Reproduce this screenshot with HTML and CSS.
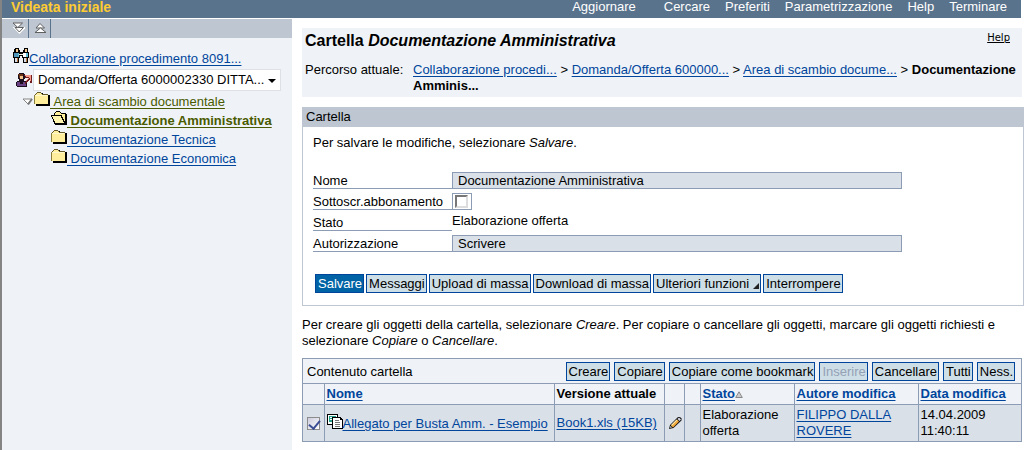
FILE: index.html
```html
<!DOCTYPE html>
<html lang="it">
<head>
<meta charset="utf-8">
<title>Cartella Documentazione Amministrativa</title>
<link rel="stylesheet" href="styles.css">
</head>
<body>
<svg class="defs" width="0" height="0" aria-hidden="true">
  <symbol id="folder" viewBox="0 0 16 14">
    <path d="M2 3h1V2h1V1h5v1h1v1h6v11H2z" fill="#000"/>
    <path d="M0 3h1V2h1V1h1V0h4v1h1v1h6v1H0z" fill="#665c2c"/>
    <path d="M0 3h14v9H0z" fill="#8c8040"/>
    <path d="M1 3h1V2h1V1h4v1h1v1h6v9H1z" fill="#ffef9c"/>
    <path d="M1 3h12v1H1z" fill="#fff8cf"/>
  </symbol>
  <symbol id="folder-open" viewBox="0 0 16 14">
    <path d="M3 2h1V1h1V0h4v1h1v1h5v1h1v11H4v-1H3v-2H2V8H1V6H0V4h3z" fill="#000"/>
    <path d="M4 2h1V1h4v1h1v1h4v7h-1V8h-1V6h-1V4H4z" fill="#ffef9c"/>
    <path d="M1 5h9v2h1v2h1v2h1v1H4v-2H3V8H2V6H1z" fill="#fff4ae"/>
  </symbol>
</svg>
<div class="app">
  <header class="topbar">
    <h1 class="topbar-title">Videata iniziale</h1>
    <nav class="topbar-nav">
      <a class="nav-refresh" href="#">Aggiornare</a>
      <a href="#">Cercare</a>
      <a href="#">Preferiti</a>
      <a href="#">Parametrizzazione</a>
      <a href="#">Help</a>
      <a href="#">Terminare</a>
    </nav>
  </header>
  <div class="columns">
    <aside class="sidebar">
      <div class="side-tools">
        <button class="tool" type="button" aria-label="Espandere tutto">
          <svg width="13" height="12" viewBox="0 0 13 12"><path d="M3 6h9l-4.500 4.500z" fill="#fff" stroke="#fff" stroke-width="2"/><path d="M3 5.500h8.500L7.300 10z" fill="#fff" stroke="#606060"/><path d="M1 1h9.500L5.800 5.500z" fill="#fff" stroke="#606060"/></svg>
        </button>
        <button class="tool" type="button" aria-label="Comprimere tutto">
          <svg width="13" height="12" viewBox="0 0 13 12"><path d="M2 6 6 1.500 10.500 6z" fill="#fff" stroke="#606060"/><path d="M1 10.500 6.500 6l5.500 4.500z" fill="#fff" stroke="#606060"/></svg>
        </button>
      </div>
      <div class="tree">
        <div class="tree-root">
          <svg class="crisp" width="16" height="15" viewBox="0 0 16 15">
            <path d="M2 0h4v2h1v2h3V2h1V0h4v4h1v6h-1v5h-5v-5H9V8H7v2H6v5H1v-5H0V4h1V1h1z" fill="#000"/>
            <path d="M3 1h2v3H3zM12 1h2v3h-2z" fill="#f4c890"/>
            <path d="M1 5h4v4H1z" fill="#4f93b8"/><path d="M5 5h1v4H5zM13 5h2v4h-2z" fill="#62bdd8"/><path d="M10 5h3v4h-3z" fill="#fff"/>
            <path d="M6 6h4v1H6z" fill="#f7f0dc"/>
            <path d="M2 10h2v4H2zM11 10h2v4h-2z" fill="#d8dce8"/><path d="M4 10h1v4H4zM13 10h1v4h-1z" fill="#b87838"/>
          </svg><a class="link" href="#">Collaborazione procedimento 8091...</a>
        </div>
        <div class="tree-picker">
          <svg class="crisp" width="16" height="15" viewBox="0 0 16 15">
            <path d="M3 0h5v1h1v5H8v2h3v6H1v-1H0V9h1V8h2V6H2V1h1z" fill="#1c1020"/>
            <path d="M3 2h4v4H4V5H3z" fill="#f3c48c"/><path d="M2 1h5v2H4v2H3V2H2z" fill="#6d3518"/>
            <path d="M1 9h3v2h3V9h3v4H1z" fill="#6a4284"/>
            <path d="M8 2h8v8h-2V7h-1v1h-1v1h-1v1h-1v1H9V9h1V8h1V7h1V5H9V3H8z" fill="#702020"/>
            <path d="M9 2h6v6h-1V5h-1v1h-1v1h-1v1h-1V7h1V6h1V5h1V4h-3V3H9z" fill="#f59a8a"/>
          </svg>
          <span class="picker">
            <select aria-label="Domanda/Offerta"><option>Domanda/Offerta 6000002330 DITTA...</option></select>
            <svg class="picker-arrow" width="8" height="4" viewBox="0 0 8 4"><path d="M0 0h8L4 4z"/></svg>
          </span>
        </div>
        <ul class="branch">
          <li class="node">
            <svg class="twisty" width="12" height="8" viewBox="0 0 12 8"><path d="M1 1h9L6 6z" fill="#fff" stroke="#858585" stroke-width="1"/><path d="M10 1 6 6.500" stroke="#777" stroke-width="2"/></svg><svg class="crisp" width="16" height="14"><use href="#folder"/></svg><a class="link olive" href="#">&nbsp;Area di scambio documentale</a>
          </li>
          <li class="node child">
            <svg class="crisp" width="16" height="14"><use href="#folder-open"/></svg><a class="link olive strong" href="#">&nbsp;Documentazione Amministrativa</a>
          </li>
          <li class="node child">
            <svg class="crisp" width="16" height="14"><use href="#folder"/></svg><a class="link" href="#">&nbsp;Documentazione Tecnica</a>
          </li>
          <li class="node child">
            <svg class="crisp" width="16" height="14"><use href="#folder"/></svg><a class="link" href="#">&nbsp;Documentazione Economica</a>
          </li>
        </ul>
      </div>
    </aside>
    <main class="content">
      <section class="page-head">
        <div class="head-row">
          <h2 class="page-title">Cartella <em>Documentazione Amministrativa</em></h2>
          <a class="help" href="#">Help</a>
        </div>
        <div class="path">
          <span class="path-label">Percorso attuale:</span>
          <nav class="path-items"><a class="link" href="#">Collaborazione procedi...</a> &gt; <a class="link" href="#">Domanda/Offerta 600000...</a> &gt; <a class="link" href="#">Area di scambio docume...</a> &gt; <b>Documentazione Amminis...</b></nav>
        </div>
      </section>
      <section class="panel">
        <h3 class="panel-title">Cartella</h3>
        <form class="panel-body">
          <p class="hint">Per salvare le modifiche, selezionare <em>Salvare</em>.</p>
          <div class="fields">
            <label class="field-label" for="nome">Nome</label>
            <input class="field-input" id="nome" type="text" value="Documentazione Amministrativa" readonly>
            <label class="field-label" for="abbo">Sottoscr.abbonamento</label>
            <span class="check-frame"><input class="sunken" id="abbo" type="checkbox"></span>
            <span class="field-label">Stato</span>
            <span class="field-text">Elaborazione offerta</span>
            <label class="field-label" for="auth">Autorizzazione</label>
            <input class="field-input" id="auth" type="text" value="Scrivere" readonly>
          </div>
          <div class="actions">
            <button class="btn primary" type="button">Salvare</button>
            <button class="btn" type="button">Messaggi</button>
            <button class="btn" type="button">Upload di massa</button>
            <button class="btn" type="button">Download di massa</button>
            <button class="btn" type="button">Ulteriori funzioni <svg width="6" height="6" viewBox="0 0 6 6"><path d="M6 0v6H0z" fill="#222"/></svg></button>
            <button class="btn" type="button">Interrompere</button>
          </div>
        </form>
      </section>
      <p class="instructions">Per creare gli oggetti della cartella, selezionare <em>Creare</em>. Per copiare o cancellare gli oggetti, marcare gli oggetti richiesti e selezionare <em>Copiare</em> o <em>Cancellare</em>.</p>
      <section class="listing">
        <div class="list-bar">
          <h3 class="list-title">Contenuto cartella</h3>
          <div class="list-actions">
            <button class="btn" type="button">Creare</button>
            <button class="btn" type="button">Copiare</button>
            <button class="btn" type="button">Copiare come bookmark</button>
            <button class="btn" type="button" disabled>Inserire</button>
            <button class="btn" type="button">Cancellare</button>
            <button class="btn" type="button">Tutti</button>
            <button class="btn" type="button">Ness.</button>
          </div>
        </div>
        <table class="grid">
          <colgroup><col class="c-check"><col class="c-name"><col class="c-version"><col class="c-edit"><col class="c-blank"><col class="c-state"><col class="c-author"><col class="c-date"></colgroup>
          <thead>
            <tr>
              <th></th>
              <th><a class="link" href="#">Nome</a></th>
              <th>Versione attuale</th>
              <th></th>
              <th></th>
              <th><a class="link" href="#">Stato</a><svg width="8" height="7" viewBox="0 0 8 7"><path d="M4 .8 7.300 6.500H.7z" fill="#ccc" stroke="#888"/></svg></th>
              <th><a class="link" href="#">Autore modifica</a></th>
              <th><a class="link" href="#">Data modifica</a></th>
            </tr>
          </thead>
          <tbody>
            <tr>
              <td class="mid"><input class="tick" type="checkbox" aria-label="Selezionare Allegato per Busta Amm. - Esempio" checked></td>
              <td><span class="doc"><svg class="crisp" width="16" height="15" viewBox="0 0 16 15"><path d="M0 0h11v11H0z" fill="#000"/><path d="M1 1h9v9H1z" fill="#fff"/><path d="M2 2h7v6H2z" fill="#25a08c"/><path d="M3 3h2v1H3zM3 5h2v1H3zM6 3h1v1H6z" fill="#fff"/><path d="M5 3h9v1h1v1h1v10H5z" fill="#000"/><path d="M6 4h7v2h2v8H6z" fill="#fff"/><path d="M8 6h4v1H8zM8 8h5v1H8zM8 10h5v1H8zM8 12h5v1H8z" fill="#777"/></svg><a class="link" href="#">Allegato per Busta Amm. - Esempio</a></span></td>
              <td><a class="link" href="#">Book1.xls (15KB)</a></td>
              <td class="mid"><button class="tool" type="button" aria-label="Modificare"><svg width="14" height="14" viewBox="0 0 14 14"><path d="M1 13 2 9 10 1h2l1.500 1.500v2L5.500 12z" fill="#111"/><path d="M3 9.500 9 3.500 11 5.500 5 11.500z" fill="#f2a83a"/><path d="M3 9 8.500 3.500l.8.8-5.500 5.500z" fill="#fff0b0"/><path d="M9.500 3 11 1.500 13 3.500 11.500 5z" fill="#d8d8e4"/><path d="M2 11.800 2.600 10 4 11.500z" fill="#eee"/></svg></button></td>
              <td></td>
              <td>Elaborazione offerta</td>
              <td><a class="link" href="#">FILIPPO DALLA ROVERE</a></td>
              <td>14.04.2009 11:40:11</td>
            </tr>
          </tbody>
        </table>
      </section>
    </main>
  </div>
</div>
</body>
</html>
```
FILE: styles.css
```css
* { box-sizing: border-box; }
body {
  margin: 0;
  background: #fff;
  color: #000;
  font: 13px/16px "Liberation Sans", Arial, sans-serif;
}
h1, h2, h3, p, ul { margin: 0; padding: 0; font-size: inherit; font-weight: normal; }
button, input, select { font: inherit; color: inherit; }
svg { flex: none; display: block; }
.defs { position: absolute; }
.crisp { shape-rendering: crispEdges; }
.app { display: flex; flex-direction: column; min-height: 100vh; border-left: 2px solid #848484; }

.topbar {
  display: flex;
  justify-content: space-between;
  height: 18px;
  margin-right: 4px;
  padding: 0 14px 4px 9px;
  background: #5a738c;
  color: #fff;
  line-height: 14px;
}
.topbar-title { color: #fc3; font-size: 14px; font-weight: bold; }
.topbar-nav { display: flex; gap: 15px; }
.topbar-nav a { color: #fff; text-decoration: none; }
.topbar-nav .nav-refresh { margin-right: 13px; }

.columns { display: flex; flex: 1; gap: 10px; margin-top: 1px; }
.sidebar { flex: none; width: 290px; background: #eff3f7; }
.side-tools { display: flex; height: 19px; padding: 0 5px; background: #bdc6d1; }
.tool { display: flex; padding: 0; border: 0; background: none; }
.side-tools .tool { align-items: center; padding: 0 3px 2px 5px; border-right: 1px solid #5a738c; }
.tree { padding: 10px 8px; }
.tree-root { display: flex; padding: 0 3px; }
.tree-root .link { padding-top: 3px; }
.tree-picker { display: flex; gap: 1px; margin-top: 2px; padding-left: 6px; align-items: center; }
.picker { position: relative; width: 248px; }
.picker select {
  display: block;
  width: 100%;
  height: 22px;
  padding: 0 4px;
  border: 1px solid #dde1e6;
  background: #fff;
  appearance: none;
}
.picker-arrow { position: absolute; right: 5px; top: 10px; pointer-events: none; }
.branch { list-style: none; padding: 1px 0 0 12px; }
.node { display: flex; height: 19px; }
.node .link { padding-top: 2px; }
.twisty { margin-top: 6px; }
.child { padding-left: 29px; }

.link { color: #00459c; text-underline-offset: 2px; }
.olive { color: #4a5a00; }
.strong { font-weight: bold; }

.content { flex: 1; min-width: 0; padding-top: 9px; }
.page-head { margin-right: 3px; padding: 4px 5px 3px 3px; background: #eff3f7; }
.head-row { display: flex; justify-content: space-between; }
.page-title { font-size: 16px; font-weight: bold; line-height: 18px; }
.help { padding-right: 7px; color: #000; font: 10px/12px "DejaVu Sans", sans-serif; }
.path { display: flex; padding: 12px 0 0; }
.path-label { flex: none; width: 108px; }

.panel { margin: 10px 1px 0 0; border: 1px solid #bdc6d1; }
.panel-title { padding: 1px 3px 2px; background: #bdc6d1; }
.panel-body { padding: 8px 10px 12px; }
.fields {
  display: grid;
  grid-template-columns: 139px minmax(0, 450px);
  grid-auto-rows: 17px;
  row-gap: 4px;
  margin-top: 21px;
}
.field-label { border-bottom: 1px solid #8c9cb5; line-height: 18px; }
.field-input { width: 100%; height: 17px; padding: 0 5px; border: 1px solid #8c9cb5; background: #d9e0e8; }
.field-text { line-height: 14px; }
.check-frame { display: flex; justify-content: flex-start; width: 20px; padding: 1px 2px; border: 1px solid #8c9cb5; }
.sunken {
  width: 13px;
  height: 13px;
  margin: 0;
  border: 2px solid;
  border-color: #777 #ddd #ddd #777;
  background: #fff;
  appearance: none;
}
.actions { display: flex; flex-wrap: wrap; gap: 2px; margin-top: 22px; padding-left: 2px; }
.btn {
  display: flex;
  align-items: flex-end;
  gap: 4px;
  height: 19px;
  padding: 0 1px 0 2px;
  border: 1px solid #00459c;
  background: #cedee7;
  line-height: 17px;
  white-space: nowrap;
}
.btn svg { margin-bottom: 3px; }
.btn:disabled { color: #94a1b5; }
.btn.primary { background: #0063a5; border-color: #00459c; color: #fff; }

.instructions { margin: 11px 3px 0 0; }

.listing { margin: 9px 3px 0 0; border: 1px solid #8c9cb5; }
.list-bar {
  display: flex;
  justify-content: space-between;
  padding: 3px 6px 2px 4px;
  border-bottom: 1px solid #8c9cb5;
  background: #eff3f7;
}
.list-title { padding-top: 2px; }
.list-actions { display: flex; gap: 4px; }
.grid { width: 100%; table-layout: fixed; border-collapse: collapse; border-style: hidden; background: #d9e0e8; }
.grid th, .grid td { padding: 2px; border: 1px solid #8c9cb5; text-align: left; }
.grid th { background: #eff3f7; white-space: nowrap; }
.grid th svg { display: inline-block; }
.grid .mid { padding: 2px 3px; }
.grid .tick { display: block; width: 13px; height: 13px; margin: 0 0 0 1px; appearance: none; border: 1px solid #8c8c8c; background: linear-gradient(135deg, #ccd, #fff); }
.tick:checked::before {
  content: "";
  display: block;
  width: 5px;
  height: 9px;
  margin: 0 0 0 3px;
  border: solid #3c4f94;
  border-width: 0 2px 2px 0;
  transform: rotate(40deg);
}
.doc { display: flex; white-space: nowrap; }
.doc .link { padding-top: 2px; }
.c-check { width: 21px; }
.c-name { width: 230px; }
.c-version { width: 110px; }
.c-edit { width: 20px; }
.c-blank { width: 16px; }
.c-state { width: 94px; }
.c-author { width: 124px; }
```
